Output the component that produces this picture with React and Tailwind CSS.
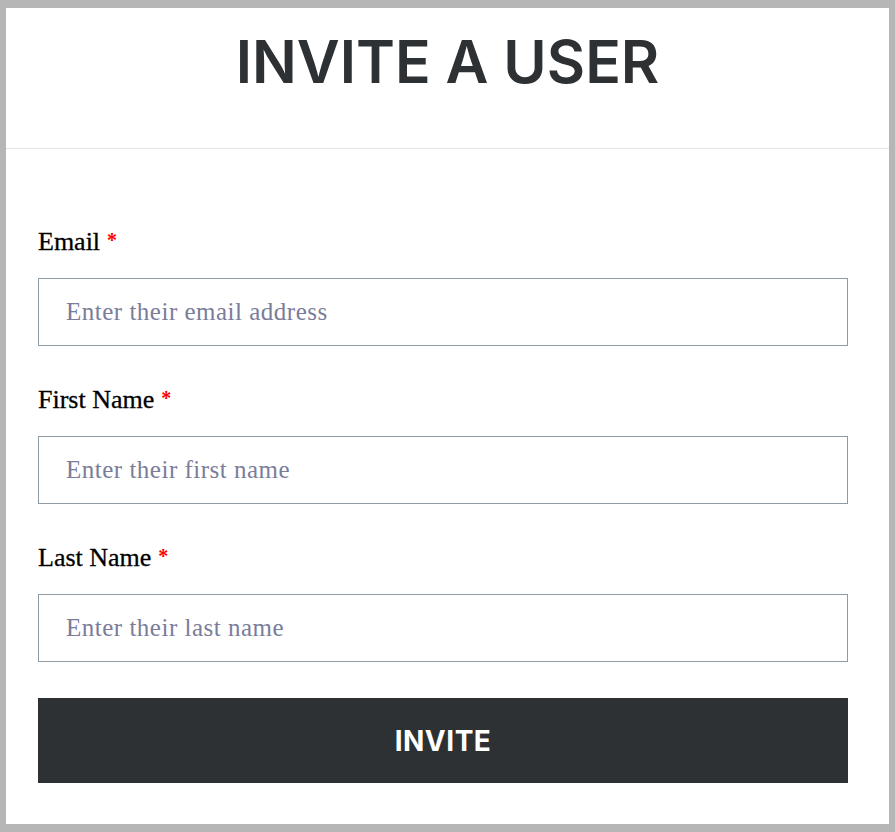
const FIELDS = [
  { id: 'email', label: 'Email', placeholder: 'Enter their email address' },
  { id: 'first', label: 'First Name', placeholder: 'Enter their first name' },
  { id: 'last', label: 'Last Name', placeholder: 'Enter their last name' },
]

export default function App() {
  return (
    <div className="min-h-[832px] bg-[#b5b6b5] pt-[8px] pl-[6px] pr-[6px] pb-[8px]">
      <div className="bg-white w-[883px] h-[816px]">
        <div className="h-[141px] flex justify-center border-b border-[#e6e6e6]">
          <h1 className="mt-[19px] text-[59px] leading-[70px] font-semibold text-[#2d3134]" style={{ fontFamily: 'Inter, Roboto, sans-serif' }}>
            INVITE A USER
          </h1>
        </div>

        <form className="pl-[32px] pt-[77px]" style={{ fontFamily: '"Liberation Serif", serif' }} onSubmit={(e) => e.preventDefault()}>
          <div className="flex flex-col gap-[38px]">
            {FIELDS.map((f) => (
              <div key={f.id}>
                <label htmlFor={f.id} className="flex items-start text-[26px] leading-[32px] text-black [-webkit-text-stroke:0.3px_#000]">
                  {f.label}
                  <span className="ml-[7px] mt-[3px] text-[#ff0000] text-[20px] leading-[22px] font-bold [-webkit-text-stroke:0]">*</span>
                </label>
                <input
                  id={f.id}
                  placeholder={f.placeholder}
                  className="mt-[20px] block w-[810px] h-[68px] border border-[#8d9ba4] px-[27px] text-[25px] tracking-[0.5px] placeholder:text-[#7a7d9a] outline-none"
                />
              </div>
            ))}
          </div>
          <button
            type="submit"
            className="mt-[36px] w-[810px] h-[85px] bg-[#2d3134] text-white text-[28px] font-bold tracking-[0.5px]"
            style={{ fontFamily: 'Inter, Roboto, sans-serif' }}
          >
            INVITE
          </button>
        </form>
      </div>
    </div>
  )
}
